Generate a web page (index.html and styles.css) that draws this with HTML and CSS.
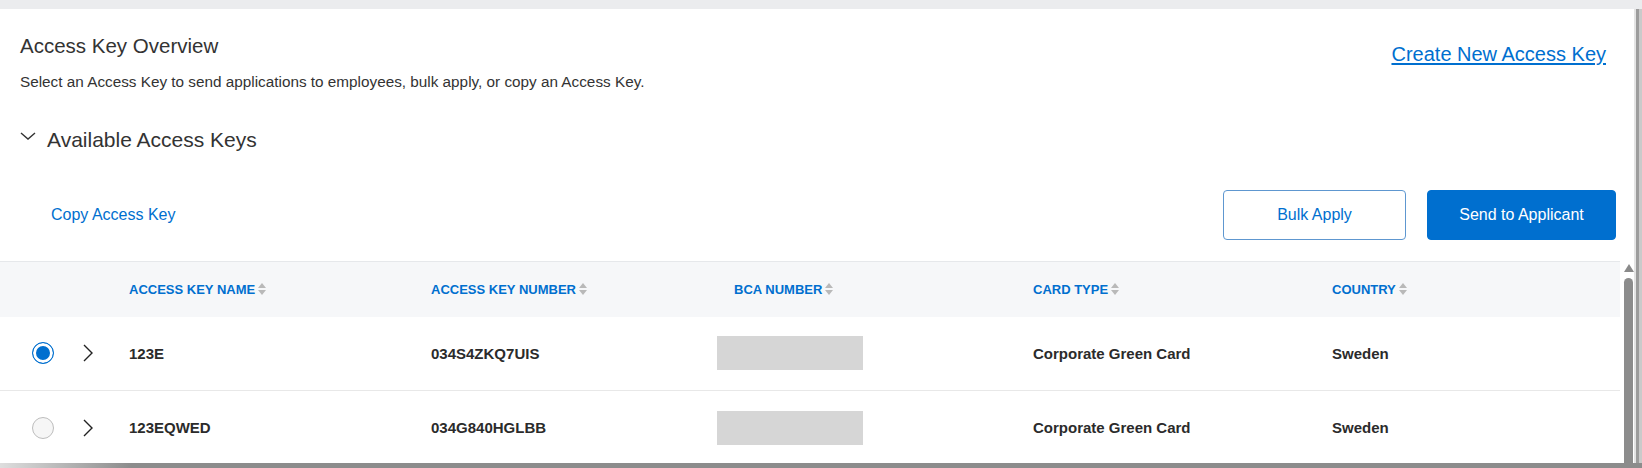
FILE: index.html
```html
<!DOCTYPE html>
<html>
  <head>
    <meta charset="UTF-8" />
    <title>Access Key Overview</title>
    <link rel="stylesheet" href="styles.css">
  </head>
  <body>
    <div class="window">
      <div class="screen">
        <div class="card">
          <div class="overview">
            <div class="overview-text">
              <h1 class="title">Access Key Overview</h1>
              <p class="intro">Select an Access Key to send applications to employees, bulk apply, or copy an Access Key.</p>
            </div>
            <a href="#" class="create-link">Create New Access Key</a>
          </div>

          <div class="section-toggle">
            <svg class="toggle-icon" width="16" height="8" viewBox="0 0 16 8">
              <path d="M1 1l7 6 7-6" fill="none" stroke="#333" stroke-width="1.4" />
            </svg>
            <h2 class="section-title">Available Access Keys</h2>
          </div>

          <div class="actions">
            <a href="#" class="copy-link">Copy Access Key</a>
            <div class="buttons">
              <button class="btn btn-outline">Bulk Apply</button>
              <button class="btn btn-primary">Send to Applicant</button>
            </div>
          </div>

          <div class="table-wrap">
            <table class="keys">
              <colgroup>
                <col class="col-radio">
                <col class="col-expand">
                <col class="col-name">
                <col class="col-number">
                <col class="col-bca">
                <col class="col-card">
                <col class="col-country">
              </colgroup>
              <thead>
                <tr>
                  <th></th>
                  <th></th>
                  <th><span class="sort">ACCESS KEY NAME<svg width="10" height="14" viewBox="0 0 10 14"><path d="M1 6l4-5 4 5zM1 8l4 5 4-5z" fill="#b9b9b9" /></svg></span></th>
                  <th><span class="sort">ACCESS KEY NUMBER<svg width="10" height="14" viewBox="0 0 10 14"><path d="M1 6l4-5 4 5zM1 8l4 5 4-5z" fill="#b9b9b9" /></svg></span></th>
                  <th class="th-bca"><span class="sort">BCA NUMBER<svg width="10" height="14" viewBox="0 0 10 14"><path d="M1 6l4-5 4 5zM1 8l4 5 4-5z" fill="#b9b9b9" /></svg></span></th>
                  <th><span class="sort">CARD TYPE<svg width="10" height="14" viewBox="0 0 10 14"><path d="M1 6l4-5 4 5zM1 8l4 5 4-5z" fill="#b9b9b9" /></svg></span></th>
                  <th><span class="sort">COUNTRY<svg width="10" height="14" viewBox="0 0 10 14"><path d="M1 6l4-5 4 5zM1 8l4 5 4-5z" fill="#b9b9b9" /></svg></span></th>
                </tr>
              </thead>
              <tbody>
                <tr>
                  <td class="td-radio"><span class="radio checked"></span></td>
                  <td class="td-expand"><svg width="12" height="18" viewBox="0 0 12 18"><path d="M2 1l8 8-8 8" fill="none" stroke="#222" stroke-width="1.4" /></svg></td>
                  <td>123E</td>
                  <td>034S4ZKQ7UIS</td>
                  <td><span class="mask"></span></td>
                  <td>Corporate Green Card</td>
                  <td>Sweden</td>
                </tr>
                <tr>
                  <td class="td-radio"><span class="radio"></span></td>
                  <td class="td-expand"><svg width="12" height="18" viewBox="0 0 12 18"><path d="M2 1l8 8-8 8" fill="none" stroke="#222" stroke-width="1.4" /></svg></td>
                  <td>123EQWED</td>
                  <td>034G840HGLBB</td>
                  <td><span class="mask"></span></td>
                  <td>Corporate Green Card</td>
                  <td>Sweden</td>
                </tr>
              </tbody>
            </table>
            <div class="scrollbar">
              <span class="scroll-arrow"></span>
              <span class="scroll-thumb"></span>
            </div>
          </div>
        </div>
        <div class="edge-right"></div>
      </div>
      <div class="edge-bottom"></div>
    </div>
  </body>
</html>
```

FILE: styles.css
```css
* {
  margin: 0;
  padding: 0;
  box-sizing: border-box;
}
html,
body {
  height: 468px;
  overflow: hidden;
}
body {
  background: #ebecee;
  font-family: 'Liberation Sans', Arial, sans-serif;
  color: #333;
}
.window {
  height: 468px;
  padding-top: 9px;
  display: flex;
  flex-direction: column;
}
.screen {
  display: flex;
  height: 454px;
}
.card {
  width: 1634px;
  height: 454px;
  overflow: hidden;
  background: #fff;
}
.edge-right {
  width: 8px;
  background: linear-gradient(90deg, #e4e4e4 0, #e4e4e4 25%, #9c9c9c 25%, #9c9c9c 62%, #cacaca 62%);
}
.edge-bottom {
  height: 5px;
  background: linear-gradient(90deg, #dedede 0, #8c8c8c 8%, #8c8c8c 100%);
}

.overview {
  display: flex;
  justify-content: space-between;
  align-items: flex-start;
  padding: 25px 28px 0 20px;
}
.title {
  font-size: 20.5px;
  line-height: 23px;
  font-weight: normal;
  color: #333;
}
.intro {
  margin-top: 16px;
  font-size: 15.3px;
  line-height: 17px;
  color: #333;
}
.create-link {
  margin-top: 9px;
  font-size: 20px;
  line-height: 23px;
  color: #006fcf;
  text-decoration: underline;
  text-underline-offset: 2px;
}

.section-toggle {
  display: flex;
  align-items: flex-start;
  margin-top: 38px;
  padding-left: 20px;
}
.toggle-icon {
  margin-top: 4px;
  margin-right: 11px;
}
.section-title {
  font-size: 21px;
  line-height: 24px;
  font-weight: normal;
  color: #333;
}

.actions {
  display: flex;
  justify-content: space-between;
  align-items: center;
  height: 50px;
  margin-top: 38px;
  padding: 0 18px 0 51px;
}
.copy-link {
  font-size: 16px;
  color: #006fcf;
  text-decoration: none;
}
.buttons {
  display: flex;
  gap: 21px;
}
.btn {
  height: 50px;
  border-radius: 4px;
  font-family: 'Liberation Sans', Arial, sans-serif;
  font-size: 16px;
  cursor: pointer;
}
.btn-outline {
  width: 183px;
  background: #fff;
  border: 1px solid #5e97d0;
  color: #006fcf;
}
.btn-primary {
  width: 189px;
  background: #006fcf;
  border: 1px solid #006fcf;
  color: #fff;
}

.table-wrap {
  display: flex;
  align-items: flex-start;
  margin-top: 21px;
}
.keys {
  width: 1620px;
  table-layout: fixed;
  border-collapse: collapse;
}
.col-radio { width: 70px; }
.col-expand { width: 59px; }
.col-name { width: 302px; }
.col-number { width: 286px; }
.col-bca { width: 316px; }
.col-card { width: 299px; }
.col-country { width: 288px; }

.keys thead tr {
  height: 55px;
  background: #f6f7f9;
  border-top: 1px solid #e6e8eb;
}
.keys th {
  text-align: left;
  font-size: 13px;
  font-weight: bold;
  color: #006fcf;
  vertical-align: middle;
}
.keys th.th-bca {
  padding-left: 17px;
}
.sort {
  display: inline-flex;
  align-items: center;
  gap: 2px;
}
.keys tbody tr {
  height: 74px;
  border-bottom: 1px solid #e8e8e8;
}
.keys td {
  font-size: 15px;
  font-weight: bold;
  color: #2b2b2b;
  vertical-align: middle;
}
.td-radio {
  padding-left: 32px;
}
.td-expand {
  padding-left: 12px;
}
.td-expand svg,
.radio {
  display: block;
}
.radio {
  width: 22px;
  height: 22px;
  border-radius: 50%;
  border: 1px solid #bdbdbd;
  background: #f6f6f6;
}
.radio.checked {
  border-color: #006fcf;
  background: #006fcf;
  box-shadow: inset 0 0 0 3px #fff;
}
.mask {
  display: block;
  width: 146px;
  height: 34px;
  background: #d6d6d6;
}

.scrollbar {
  width: 14px;
  height: 210px;
  padding: 3px 1px 0 4px;
  display: flex;
  flex-direction: column;
  align-items: center;
}
.scroll-arrow {
  width: 0;
  height: 0;
  border-left: 5px solid transparent;
  border-right: 5px solid transparent;
  border-bottom: 8px solid #8a8a8a;
}
.scroll-thumb {
  width: 9px;
  flex: 1;
  margin-top: 6px;
  border-radius: 5px 5px 0 0;
  background: #8c8c8c;
}
```
